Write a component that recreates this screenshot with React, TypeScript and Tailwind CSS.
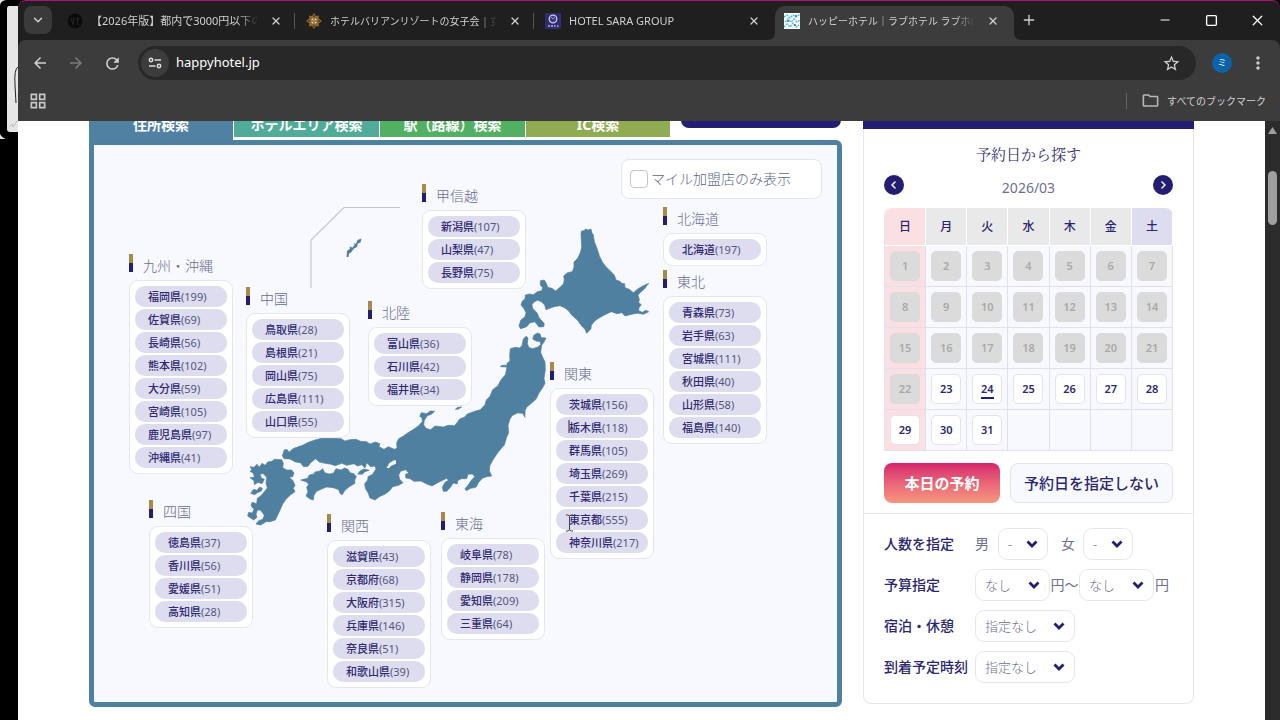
import type { ReactNode } from "react";
import clsx from "clsx";
import { ChevronDown, X, Plus, Minus, Square } from "lucide-react";
import {
  MdArrowBack,
  MdArrowForward,
  MdRefresh,
  MdStarBorder,
  MdMoreVert,
  MdOutlineGridView,
  MdOutlineFolder,
} from "react-icons/md";
import { FaChevronLeft, FaChevronRight } from "react-icons/fa6";

const browserTabs = [
  { title: "【2026年版】都内で3000円以下の", icon: <BlackIcon />, size: "text-[11px]", active: false },
  { title: "ホテルバリアンリゾートの女子会 | 女", icon: <GoldIcon />, size: "text-[10px]", active: false },
  { title: "HOTEL SARA GROUP", icon: <SaraIcon />, size: "text-[11px]", active: false },
  { title: "ハッピーホテル｜ラブホテル ラブホの予", icon: <HappyIcon />, size: "text-[10px]", active: true },
];

const searchTabs = [
  { label: "住所検索", style: "w-[144px] bg-[#5080a2]" },
  { label: "ホテルエリア検索", style: "w-[146px] bg-[#50ac98] border-l border-b border-white" },
  { label: "駅（路線）検索", style: "w-[146px] bg-[#52b062] border-l border-b border-white" },
  { label: "IC検索", style: "w-[145px] bg-[#90ac52] border-l border-b border-white" },
];

type Region = { name: string; pos: string; prefs: [string, number][] };

const regions: Region[] = [
  {
    name: "甲信越",
    pos: "left-[328px] top-[39px]",
    prefs: [["新潟県", 107], ["山梨県", 47], ["長野県", 75]],
  },
  { name: "北海道", pos: "left-[569px] top-[62px]", prefs: [["北海道", 197]] },
  {
    name: "東北",
    pos: "left-[569px] top-[125px]",
    prefs: [["青森県", 73], ["岩手県", 63], ["宮城県", 111], ["秋田県", 40], ["山形県", 58], ["福島県", 140]],
  },
  {
    name: "九州・沖縄",
    pos: "left-[35px] top-[109px]",
    prefs: [
      ["福岡県", 199], ["佐賀県", 69], ["長崎県", 56], ["熊本県", 102],
      ["大分県", 59], ["宮崎県", 105], ["鹿児島県", 97], ["沖縄県", 41],
    ],
  },
  {
    name: "中国",
    pos: "left-[152px] top-[142px]",
    prefs: [["鳥取県", 28], ["島根県", 21], ["岡山県", 75], ["広島県", 111], ["山口県", 55]],
  },
  {
    name: "北陸",
    pos: "left-[274px] top-[156px]",
    prefs: [["富山県", 36], ["石川県", 42], ["福井県", 34]],
  },
  {
    name: "関東",
    pos: "left-[456px] top-[217px]",
    prefs: [
      ["茨城県", 156], ["栃木県", 118], ["群馬県", 105], ["埼玉県", 269],
      ["千葉県", 215], ["東京都", 555], ["神奈川県", 217],
    ],
  },
  {
    name: "四国",
    pos: "left-[55px] top-[355px]",
    prefs: [["徳島県", 37], ["香川県", 56], ["愛媛県", 51], ["高知県", 28]],
  },
  {
    name: "関西",
    pos: "left-[233px] top-[369px]",
    prefs: [["滋賀県", 43], ["京都府", 68], ["大阪府", 315], ["兵庫県", 146], ["奈良県", 51], ["和歌山県", 39]],
  },
  {
    name: "東海",
    pos: "left-[347px] top-[367px]",
    prefs: [["岐阜県", 78], ["静岡県", 178], ["愛知県", 209], ["三重県", 64]],
  },
];

const weekdays = ["日", "月", "火", "水", "木", "金", "土"];
const weeks = [0, 1, 2, 3, 4].map((w) => weekdays.map((_, d) => w * 7 + d + 1));
const TODAY = 24;
const FIRST_OPEN = 23;

function BlackIcon() {
  return (
    <svg width="16" height="16" viewBox="0 0 16 16">
      <circle cx="8" cy="8" r="7.5" fill="#0b0b0b" />
      <path d="M4 5l2 6M7 4l-1 8M10 4l1 8M12 5l-2 3" stroke="#262626" fill="none" />
    </svg>
  );
}

function GoldIcon() {
  return (
    <svg width="16" height="16" viewBox="0 0 16 16">
      <path
        d="M8 0l2 3 3-.5-.4 3L16 8l-3.400 2.500.4 3-3-.5L8 16l-2-3-3 .5.4-3L0 8l3.400-2.500-.4-3 3 .5z"
        fill="#8d6a26"
      />
      <path d="M8 4l4 4-4 4-4-4z" fill="#e8cfa8" />
      <path d="M8 2v12M2 8h12" stroke="#3a2a12" />
      <circle cx="8" cy="8" r="1.500" fill="#b8746a" />
    </svg>
  );
}

function SaraIcon() {
  return (
    <svg width="16" height="16" viewBox="0 0 16 16">
      <rect width="16" height="16" rx="1" fill="#2f2c6d" />
      <circle cx="8" cy="6" r="3.800" fill="#3d3a80" stroke="#c9c9e6" strokeWidth="1.300" />
      <path d="M6 4l2 2 2-2" stroke="#8f8fc4" fill="none" />
      <path d="M3 13h2M6 13h2M9 13h1.500M12 13h1.500" stroke="#b5b5d8" strokeWidth="1.500" />
    </svg>
  );
}

function HappyIcon() {
  return (
    <svg width="16" height="16" viewBox="0 0 16 16">
      <rect width="16" height="16" fill="#f4fcff" />
      <path
        d="M0 4l3-2 3 3 3-3 3 2 4-3M1 9l3-3 3 3 3-3 3 3 3-2M0 14l3-3 3 3 3-4 3 4 3-2"
        stroke="#4fb3d6"
        strokeWidth="1.300"
        strokeDasharray="2 1"
        fill="none"
      />
      <path d="M3 8h2M10 12h2M11 3h2" stroke="#1f7f95" strokeWidth="1.500" />
    </svg>
  );
}

function WindowEdge() {
  return (
    <svg width="18" height="140" viewBox="0 0 18 140" className="absolute left-0 top-0" aria-hidden="true">
      <path d="M18 6h-9q-2 0-2 3v120q0 3 3 3h8z" fill="#e6e6e6" />
      <path d="M18 67q-4 2-3 18l1 18" stroke="#222" fill="none" />
      <path d="M9 127l3-3 1 3 4-6" stroke="#bbb" fill="none" />
      <path d="M0 0h6Q0 1 0 6zM0 134q2 4 6 5H0z" fill="#e6e6e6" />
    </svg>
  );
}

function BrowserHeader() {
  return (
    <header className="bg-[#1f1f1f] border-t border-[#b0107e] rounded-t-lg text-[#d0d0d0]">
      <div className="flex items-end h-[39px] pl-1.5">
        <button aria-label="タブを検索" className="w-7 h-7 mb-[6px] mr-1.5 rounded-lg bg-[#3a3a3a] flex items-center justify-center">
          <ChevronDown size={14} strokeWidth={2.5} />
        </button>
        {browserTabs.map((tab) => (
          <div
            key={tab.title}
            className={clsx(
              "relative w-[239px] h-[34px] pl-[9px] pb-[5px] flex items-center gap-2 shrink",
              tab.active ? "bg-[#3c3c3c] rounded-t-[10px] mr-[-5px]" : "pr-[9px]",
            )}
          >
            <span className="shrink-0">{tab.icon}</span>
            <span
              className={clsx(
                "w-[167px] shrink-0 overflow-hidden whitespace-nowrap leading-4 [mask-image:linear-gradient(to_right,black_88%,transparent)]",
                tab.size,
              )}
            >
              {tab.title}
            </span>
            <button aria-label="閉じる" className="w-5 h-5 shrink-0 flex items-center justify-center">
              <X size={12} strokeWidth={2.5} />
            </button>
            {tab.active ? (
              <>
                <svg width="8" height="8" className="absolute -left-2 bottom-0"><path d="M8 0v8H0q8 0 8-8" fill="#3c3c3c" /></svg>
                <svg width="8" height="8" className="absolute -right-2 bottom-0"><path d="M0 0v8h8q-8 0-8-8" fill="#3c3c3c" /></svg>
              </>
            ) : (
              !tab.title.startsWith("HOTEL") && (
                <span className="absolute right-[2px] top-[7px] w-px h-4 bg-[#555]" />
              )
            )}
          </div>
        ))}
        <button aria-label="新しいタブ" className="relative w-7 h-7 mb-[6px] ml-1.5 flex items-center justify-center">
          <Plus size={16} />
        </button>
        <div className="ml-auto self-start flex text-white">
          <button aria-label="最小化" className="w-[46px] h-[38px] flex items-center justify-center"><Minus size={14} strokeWidth={2} /></button>
          <button aria-label="最大化" className="w-[46px] h-[38px] flex items-center justify-center"><Square size={13} strokeWidth={2.500} /></button>
          <button aria-label="ウィンドウを閉じる" className="w-[46px] h-[38px] flex items-center justify-center"><X size={17} strokeWidth={1.800} /></button>
        </div>
      </div>

      <div className="bg-[#3c3c3c] rounded-t-lg">
        <div className="flex items-center h-[46px] gap-2 px-2">
          <button aria-label="戻る" className="w-7 h-7 flex items-center justify-center"><MdArrowBack size={18} /></button>
          <button aria-label="進む" className="w-7 h-7 flex items-center justify-center text-[#7c7c7c]"><MdArrowForward size={18} /></button>
          <button aria-label="再読み込み" className="w-7 h-7 flex items-center justify-center"><MdRefresh size={19} /></button>
          <div className="flex-1 h-[34px] mx-1 px-[3px] rounded-full bg-[#282828] flex items-center">
            <button aria-label="サイト情報" className="w-7 h-7 rounded-full bg-[#3c3c3c] flex items-center justify-center">
              <svg width="14" height="14" viewBox="0 0 14 14" fill="none" stroke="#dcdcdc" strokeWidth="1.500">
                <circle cx="3" cy="4" r="1.700" />
                <path d="M6.500 4H13M1 10h6.500" />
                <circle cx="11" cy="10" r="1.700" />
              </svg>
            </button>
            <input
              aria-label="アドレス"
              defaultValue="happyhotel.jp"
              className="flex-1 min-w-0 ml-[7px] bg-transparent text-[13px] text-white outline-none"
            />
            <button aria-label="ブックマークに追加" className="w-7 h-7 mr-2 flex items-center justify-center"><MdStarBorder size={19} /></button>
          </div>
          <button className="w-7 h-7 flex items-center justify-center">
            <span className="w-5 h-5 rounded-full bg-[#0c63a8] text-[9px] leading-5 text-white">ミ</span>
          </button>
          <button aria-label="メニュー" className="w-7 h-7 flex items-center justify-center"><MdMoreVert size={20} /></button>
        </div>
        <div className="flex items-center h-[35px] pb-[6px] pl-[10px] pr-[14px]">
          <button aria-label="アプリ" className="text-[#c8c8c8]"><MdOutlineGridView size={20} /></button>
          <span className="ml-auto w-px h-4 bg-[#666]" />
          <button className="ml-[14px] flex items-center gap-[7px] text-[10px] leading-4">
            <MdOutlineFolder size={19} className="text-[#b8b8b8]" />
            すべてのブックマーク
          </button>
        </div>
      </div>
    </header>
  );
}

// Outline of the islands, in the page units of the map canvas
function JapanMap() {
  return (
    <svg width="743" height="557" viewBox="94 145 743 557" className="absolute left-0 top-0" aria-hidden="true">
      <path d="M311 288V240l33-32.500h56" fill="none" stroke="#c3c6ce" strokeWidth="1.200" />
      <path d="M346.500 257l.5-6 3-2.500-.5-2 3 1 2-2.500-1-2 2.500 1 1.500-4 4-1.500-1 4-2.500 1-1 3.500-3 1.500-3 4-2 1-.5 3.500z" fill="#5080a0" />
      <g fill="#5080a0" stroke="#5080a0" strokeWidth="2" strokeLinejoin="round">
        <g transform="translate(400 140) scale(.33333)">
          <path d="M543 280L545 273 552 272 557 267 564 270 573 267 575 277 580 285 583 305 591 325 598 347 607 366 618 380 630 392 643 405 648 420 660 424 665 430 674 431 675 443 688 448 700 458 712 448 724 440 746 430 733 447 720 458 714 466 718 478 716 488 724 494 717 503 716 512 727 517 738 511 746 515 730 523 715 520 703 521 690 524 675 528 666 518 650 521 634 515 615 524 597 534 583 544 574 556 573 566 560 580 555 568 545 558 533 541 517 527 506 513 495 504 480 497 462 500 438 509 434 495 424 485 413 481 402 486 396 494 398 505 412 520 417 533 432 550 431 560 417 561 408 550 404 542 392 541 383 547 377 560 362 566 357 558 362 541 375 530 378 518 372 506 363 495 367 483 375 477 376 465 388 462 400 464 412 455 425 452 428 443 421 435 421 422 433 420 440 432 443 442 456 445 467 453 480 442 490 432 493 420 491 408 502 398 517 395 522 382 522 366 533 355 541 338 545 322z" />
        </g>
        <g transform="translate(230 320) scale(.33333)">
          <path d="M880 57L888 49 894 53 892 70 896 82 907 86 922 82 932 74 931 65 918 63 908 57 912 45 923 39 930 42 934 53 948 54 942 66 935 76 932 97 938 112 945 126 946 150 942 175 945 190 937 205 927 219 918 238 905 249 890 262 885 272 885 292 878 280 862 279 846 287 839 299 834 317 836 338 830 352 823 375 813 386 802 400 790 418 780 436 778 452 785 468 770 470 757 475 746 487 738 502 722 505 709 512 705 506 714 496 723 482 734 470 728 462 714 463 710 476 694 476 683 482 682 492 670 489 662 501 650 514 640 514 637 502 645 487 655 481 650 475 632 484 622 489 606 498 590 492 573 483 552 484 540 476 528 474 526 464 536 458 526 449 512 454 506 465 509 478 519 488 506 496 488 500 479 512 466 522 448 530 435 540 420 534 414 518 406 505 404 491 413 480 414 470 428 463 438 446 434 438 422 440 410 428 405 444 395 434 382 438 372 431 350 436 335 430 316 437 300 432 285 430 268 426 257 416 242 428 234 439 221 440 211 428 196 426 180 417 162 416 157 407 163 389 172 389 177 397 189 386 200 382 218 376 235 367 255 360 275 355 310 355 333 356 345 363 360 359 378 358 392 364 410 365 420 372 436 366 450 371 447 380 462 388 475 380 493 388 501 385 500 368 506 356 520 348 536 337 552 327 565 318 577 305 576 293 569 289 574 278 590 281 601 273 614 274 604 283 592 287 583 301 581 314 588 325 602 329 615 318 640 321 655 316 674 317 690 296 703 292 712 282 734 274 751 269 765 254 769 240 780 229 788 209 804 197 812 181 826 164 830 147 831 130 840 123 839 106 841 86 857 82 868 84 876 77z" />
          <path d="M875 12L882 0 893 5 905 0 922 2 935 4 943 15 936 20 925 10 915 5 899 9 890 20 873 25 869 15z" />
          <path d="M811 140l4-4h14v5zM676 268l7-6 12-1-11 7z" />
          <path d="M212 480L233 475 238 465 252 462 255 456 270 453 278 446 284 458 298 462 311 459 318 446 333 450 344 444 354 448 360 458 372 461 379 470 374 480 375 490 358 500 345 511 336 525 330 520 326 509 310 503 290 501 275 507 260 514 252 525 250 540 240 537 228 528 234 515 230 502 236 493 230 486z" />
          <path d="M383 462L391 452 403 447 418 451 405 455 397 463z" />
          <path d="M60 440L72 442 81 433 88 442 96 430 106 436 113 426 126 424 133 418 155 419 160 430 158 443 170 450 185 450 192 459 188 470 178 472 189 482 195 496 190 505 195 515 182 524 168 538 158 552 148 575 136 600 120 605 108 605 92 615 78 612 86 602 98 598 103 586 92 571 82 570 78 583 81 592 71 600 53 588 56 577 67 579 72 568 63 557 66 547 80 551 82 535 93 527 103 515 112 504 108 490 110 472 100 461 90 462 94 474 103 478 96 491 84 487 73 494 72 482 60 473 73 472 70 460 60 454 66 450z" />
          <path d="M62 520l9-12 10 3 8-10 8 4-3 8-12 5-8 6z" />
        </g>
      </g>
      <g transform="translate(230 320) scale(.33333)" fill="#f8f9fe">
        <path d="M470 443l8-14 14-8h6v10l-14 6-8 8z" />
      </g>
    </svg>
  );
}

function RegionCard({ name, pos, prefs }: Region) {
  return (
    <section className={clsx("absolute w-[104px]", pos)}>
      <h3 className="flex h-6 mb-[2px] gap-[10px] items-center text-sm leading-6 text-[#686c92] font-light">
        <span className="w-1 h-[18px] self-start bg-linear-to-b from-[#a88a48] from-50% to-[#241e6e] to-50%" />
        {name}
      </h3>
      <ul className="flex flex-col gap-[2px] p-[5px] bg-white border border-[#e6e6f0] rounded-[9px]">
        {prefs.map(([pref, count]) => (
          <li key={pref}>
            <a href="#" className="block h-[21px] pl-[13px] rounded-[10px] bg-[#dedcef] text-[11px] leading-[21px] text-[#53577f] whitespace-nowrap">
              <span className="font-medium text-[#2f2a72]">{pref}</span>({count})
            </a>
          </li>
        ))}
      </ul>
    </section>
  );
}

function SearchMap() {
  return (
    <div className="w-[753px] shrink-0">
      <div className="flex items-start">
        {searchTabs.map((tab) => (
          <button
            key={tab.label}
            className={clsx("h-[26px] text-sm font-bold text-white whitespace-nowrap", tab.style)}
          >
            {tab.label}
          </button>
        ))}
        <div className="ml-auto mr-px w-[160px] h-4 rounded-b-lg bg-[#231e72]" />
      </div>
      <div className="w-[144px] h-[2px] bg-[#5080a2]" />
      <div className="relative h-[567px] border-[5px] border-[#5080a0] rounded-md rounded-tl-none bg-[#f8f9fe]">
        <JapanMap />
        <div className="flex justify-end pt-[14px] pr-[15px]">
          <label className="w-[201px] h-10 px-2 flex items-center gap-[3px] bg-white border border-[#e4e4ee] rounded-lg text-sm text-[#62668a] font-light">
            <input type="checkbox" className="appearance-none w-[18px] h-[18px] border border-[#c4c4d0] rounded bg-white" />
            マイル加盟店のみ表示
          </label>
        </div>
        {regions.map((r) => (
          <RegionCard key={r.name} {...r} />
        ))}
        <svg width="8" height="120" viewBox="0 0 8 120" className="absolute left-[471px] top-[273px]" fill="none" aria-hidden="true">
          <path d="M4 2v13" stroke="#222" />
          <path d="M1 97h2l1.500 1L6 97h2M4.500 98v14M1 113h2l1.500-1L6 113h2" stroke="#444" />
        </svg>
      </div>
    </div>
  );
}

function Calendar() {
  return (
    <table className="w-full table-fixed border-separate border-spacing-0 rounded-t-lg overflow-hidden border-l border-[#e4e2f0]">
      <thead>
        <tr>
          {weekdays.map((day, i) => (
            <th
              key={day}
              className={clsx(
                "h-[38px] border-r border-b border-white text-xs font-medium text-[#2b2670]",
                i === 0 ? "bg-[#fadfe3]" : i === 6 ? "bg-[#dedcef]" : "bg-[#e9e9e9]",
              )}
            >
              {day}
            </th>
          ))}
        </tr>
      </thead>
      <tbody>
        {weeks.map((week) => (
          <tr key={week[0]}>
            {week.map((date, i) => (
              <td
                key={date}
                className={clsx(
                  "h-[41px] p-0 border-r border-b border-[#e2e0f0]",
                  i === 0 ? "bg-[#fadfe3]" : "bg-[#f8f9fe]",
                )}
              >
                {date <= 31 && (
                  <button
                    disabled={date < FIRST_OPEN}
                    className={clsx(
                      "mx-auto w-[30px] h-[30px] rounded-[5px] flex items-center justify-center border text-[11px] font-semibold",
                      date < FIRST_OPEN
                        ? "bg-[#dbdbdb] border-[#dbdbdb] text-[#a9a9a9]"
                        : "bg-white border-[#e4e2ee] text-[#2b2670]",
                    )}
                  >
                    <span className={clsx("leading-4", date === TODAY && "mt-[2px] border-b-2 border-[#231e72]")}>{date}</span>
                  </button>
                )}
              </td>
            ))}
          </tr>
        ))}
      </tbody>
    </table>
  );
}

function Select({ id, label, value, width }: { id: string; label?: string; value: string; width: string }) {
  return (
    <span className={clsx("relative inline-block shrink-0", width)}>
      <select
        id={id}
        aria-label={label}
        className="appearance-none w-full h-8 pl-[9px] bg-white border border-[#e6e6f0] rounded-[9px] text-[13px] font-light text-[#6d7190]"
      >
        <option>{value}</option>
      </select>
      <svg width="12" height="8" viewBox="0 0 12 8" className="absolute right-[10px] top-3 pointer-events-none">
        <path d="M1.500 1.500L6 6l4.500-4.500" fill="none" stroke="#231e72" strokeWidth="2.800" />
      </svg>
    </span>
  );
}

function FormRow({ id, label, children }: { id: string; label: string; children: ReactNode }) {
  return (
    <div className="flex items-center text-sm text-[#6d7190] whitespace-nowrap">
      <label htmlFor={id} className="w-[91px] shrink-0 font-medium text-[#2b2670]">{label}</label>
      {children}
    </div>
  );
}

function ReservePanel() {
  return (
    <aside className="w-[331px] shrink-0">
      <div className="h-[17px] bg-[#231e72]" />
      <div className="border border-t-0 border-[#e6e6f2] rounded-b-lg">
        <div className="px-5 pt-[15px] pb-[10px] border-b border-[#e6e6f2]">
          <h2 className="text-center text-[15px] leading-[22px] text-[#35306f] font-['Liberation_Serif','Noto_Serif_CJK_JP','Noto_Sans_CJK_JP',serif]">
            予約日から探す
          </h2>
          <div className="flex items-center justify-between h-5 mt-[9px] mb-[13px]">
            <button aria-label="前の月" className="w-5 h-5 rounded-full bg-[#231e72] text-white flex items-center justify-center"><FaChevronLeft size={8} strokeWidth={40} stroke="currentColor" /></button>
            <span className="pt-[5px] text-sm text-[#6a6f94]">2026/03</span>
            <button aria-label="次の月" className="w-5 h-5 rounded-full bg-[#231e72] text-white flex items-center justify-center"><FaChevronRight size={8} strokeWidth={40} stroke="currentColor" /></button>
          </div>
          <Calendar />
          <div className="flex gap-[10px] mt-3 text-[15px] whitespace-nowrap">
            <button className="w-[116px] h-10 rounded-lg bg-linear-to-b from-[#d61f6d] to-[#f8967f] font-bold text-white">
              本日の予約
            </button>
            <button className="flex-1 h-10 rounded-lg border border-[#e2e2ee] bg-[#f8f9fe] font-medium text-[#2b2670]">
              予約日を指定しない
            </button>
          </div>
        </div>
        <div className="flex flex-col gap-[9px] px-5 pt-[14px] pb-5">
          <FormRow id="men" label="人数を指定">
            <span className="w-[23px]">男</span>
            <Select id="men" value="-" width="w-[50px]" />
            <span className="w-[22px] ml-[13px]">女</span>
            <Select id="women" label="女" value="-" width="w-[50px]" />
          </FormRow>
          <FormRow id="budget-min" label="予算指定">
            <Select id="budget-min" value="なし" width="w-[75px]" />
            <span className="w-[29px] text-center">円～</span>
            <Select id="budget-max" label="予算上限" value="なし" width="w-[75px]" />
            <span className="ml-px">円</span>
          </FormRow>
          <FormRow id="stay" label="宿泊・休憩">
            <Select id="stay" value="指定なし" width="w-[100px]" />
          </FormRow>
          <FormRow id="arrival" label="到着予定時刻">
            <Select id="arrival" value="指定なし" width="w-[100px]" />
          </FormRow>
        </div>
      </div>
    </aside>
  );
}

export default function App() {
  return (
    <div className="relative flex h-screen pl-[18px] bg-black overflow-hidden font-['Noto_Sans','Noto_Sans_CJK_JP',sans-serif]">
      <WindowEdge />
      <div className="relative flex-1 min-w-0 flex flex-col">
        <BrowserHeader />
        <div className="flex-1 min-h-0 flex">
          <main className="flex-1 min-w-0 bg-white overflow-hidden">
            {/* page is scrolled, so the top row is partly cut off */}
            <div className="flex justify-center gap-[21px] -mt-[9px]">
              <SearchMap />
              <ReservePanel />
            </div>
          </main>
          <div className="w-[15px] pt-[6px] bg-[#2c2c2c] flex flex-col items-center">
            <svg width="9" height="7" viewBox="0 0 9 7"><path d="M4.500 0L9 7H0z" fill="#a0a0a0" /></svg>
            <div className="mt-[37px] w-[9px] h-[54px] rounded-full bg-[#9f9f9f]" />
          </div>
        </div>
      </div>
    </div>
  );
}
